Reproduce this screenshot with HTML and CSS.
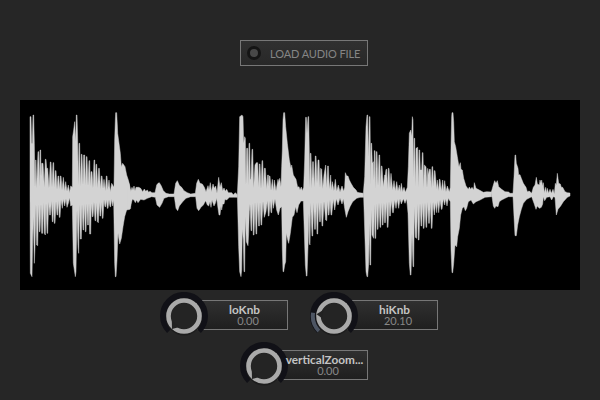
FILE: index.html
```
<!DOCTYPE html>
<html lang="en">
<head>
<meta charset="utf-8">
<title>Audio waveform</title>
<link rel="stylesheet" href="styles.css">
</head>
<body>
<main class="panel">
  <button class="load" type="button"><span class="led"></span><span class="load-text">LOAD AUDIO FILE</span></button>
  <svg class="wave" viewBox="0 0 1680 570" role="img" aria-label="Waveform">
    <!-- each polygon holds one stretch of the sample, around the zero line at y=285 -->
    <polygon points="30,285 30,50 33,50 35,130 37,130 39,45 41,45 43,130 45,262 47,180 48,180 50,265 54,155 56,155 59,260 60,150 62,150 63,230 65,190 69,190 73,262 76,178 78,178 80,205 83,205 87,264 91,186 93,186 96,262 99,188 101,188 103,262 106,212 108,212 111,268 114,228 116,228 119,268 121,228 123,228 126,270 130,232 134,272 137,245 141,274 145,255 149,278 152,258 157,262 158,110 161,90 164,65 167,125 169,45 171,45 173,120 175,256 177,130 179,130 181,258 184,163 186,163 189,256 191,165 194,165 196,256 199,170 201,170 204,258 207,182 209,182 211,258 213,215 216,215 219,264 222,180 224,180 226,260 228,193 230,193 233,264 236,205 238,205 241,266 244,228 246,228 249,266 252,238 256,272 259,228 261,228 263,270 267,240 271,275 275,250 282,262 284,120 286,60 287,38 290,38 292,75 293,100 297,130 301,160 304,200 308,190 315,200 320,225 325,240 328,252 332,275 332,325 330,328 320,330 314,350 309,380 304,415 299,432 294,400 291,480 288,530 286,530 284,490 281,300 278,318 275,298 272,320 270,320 267,299 264,325 262,325 259,299 257,320 255,320 252,299 249,355 247,355 245,306 242,348 240,348 238,306 235,368 232,365 230,308 227,362 225,362 222,306 219,350 217,350 214,310 212,402 209,402 207,310 205,375 203,375 200,310 198,395 196,395 193,312 191,390 189,390 186,312 184,417 181,417 178,314 176,460 174,440 171,330 168,515 166,530 160,490 157,315 152,318 149,293 145,310 141,322 138,296 134,318 130,298 127,325 123,299 120,352 118,352 115,302 113,345 111,345 108,304 105,370 103,370 101,306 99,365 97,365 94,304 91,345 89,345 86,306 83,400 81,400 78,308 76,405 73,400 70,308 68,400 65,400 63,312 60,395 58,395 56,312 53,437 50,435 48,312 45,440 43,490 40,350 38,420 36,530 31,520"/>
    <polygon points="325,245 328,255 332,275 336,262 339,270 342,258 345,272 348,262 356,262 362,265 368,275 373,267 377,274 382,270 386,277 390,274 396,278 405,278 410,255 414,250 418,248 424,258 430,272 438,280 448,282 462,282 467,250 472,242 478,256 485,262 492,272 502,278 512,282 526,280 530,250 535,238 540,250 547,252 553,262 558,275 564,257 567,270 571,248 574,275 579,252 583,265 587,258 591,280 596,232 600,262 604,248 608,272 612,264 616,274 620,268 625,278 635,278 640,284 646,278 652,284 652,292 640,292 628,292 620,300 615,298 612,312 608,312 605,330 603,318 600,345 597,345 594,325 590,295 586,310 582,318 576,300 573,322 570,305 566,318 562,315 557,302 550,315 543,322 536,332 531,325 527,290 512,290 498,295 488,305 478,318 473,332 468,325 463,290 445,290 432,295 426,310 419,322 411,315 406,292 395,290 382,295 372,300 362,298 354,308 350,300 346,308 342,300 337,298 332,318 325,328"/>
    <polygon points="652,284 656,200 659,50 666,45 669,50 671,130 674,110 676,115 678,256 680,145 683,145 685,256 687,130 689,130 691,240 693,235 696,148 698,148 701,264 705,195 709,188 713,188 716,262 718,192 720,192 723,266 726,182 728,182 731,262 733,205 736,205 740,266 743,225 745,225 746,260 748,228 750,228 753,272 757,238 761,272 763,240 768,272 774,238 776,248 779,235 783,260 785,200 787,150 789,60 791,38 794,38 797,80 802,130 808,180 813,205 815,195 820,225 828,238 833,262 837,260 840,270 844,261 847,272 851,262 854,180 857,52 859,52 861,100 864,50 866,50 868,160 869,262 871,160 873,160 875,264 878,185 880,185 883,262 886,168 888,168 891,250 894,180 897,180 900,264 902,205 905,208 908,266 912,225 917,195 920,264 923,198 925,198 928,268 932,225 934,270 937,245 942,272 946,238 950,274 955,255 960,276 966,258 971,274 974,262 976,218 980,228 984,228 988,240 993,250 1000,262 1008,270 1012,277 1018,278 1030,280 1031,292 1020,292 1010,295 998,305 990,320 984,335 979,352 974,325 970,296 966,312 960,294 954,315 949,296 944,330 940,298 935,345 933,345 930,300 927,345 925,345 923,304 920,362 917,360 912,304 908,378 906,378 903,306 901,365 899,365 896,306 893,402 891,402 889,308 886,388 884,388 881,308 878,408 876,408 872,308 870,435 868,430 867,340 864,440 861,528 859,528 856,495 853,400 850,303 843,303 836,315 831,338 827,320 822,345 817,352 811,400 806,430 802,415 799,400 797,485 794,495 791,515 789,515 787,450 785,320 780,325 775,345 770,330 765,297 760,325 757,298 755,338 753,338 750,302 747,348 745,348 742,302 738,335 733,352 729,304 725,375 723,375 720,306 718,378 716,378 713,306 710,402 708,402 705,306 702,405 700,405 697,310 695,392 693,392 690,312 688,335 686,400 684,437 679,425 676,350 674,515 672,515 670,420 667,388 665,510 663,530 659,515 656,440"/>
    <polygon points="1030,280 1034,230 1038,80 1041,45 1043,45 1045,170 1048,50 1050,50 1052,256 1053,130 1055,130 1057,190 1060,185 1062,240 1063,152 1065,152 1067,266 1069,155 1071,155 1074,258 1077,165 1079,165 1082,264 1084,198 1086,198 1090,260 1094,225 1096,225 1098,208 1100,208 1102,266 1105,205 1107,205 1110,264 1113,220 1118,270 1122,242 1126,272 1130,245 1134,273 1138,255 1141,275 1144,250 1148,275 1152,262 1156,277 1162,262 1165,200 1168,100 1172,90 1175,110 1177,50 1179,60 1180,235 1182,115 1184,115 1186,258 1188,145 1193,142 1195,262 1197,150 1199,150 1201,210 1205,210 1207,158 1209,158 1211,264 1213,195 1218,200 1221,264 1223,205 1226,225 1228,208 1231,208 1234,264 1236,200 1238,200 1241,260 1243,212 1245,212 1250,268 1252,240 1256,272 1258,238 1260,238 1264,273 1268,240 1271,274 1274,242 1278,275 1282,258 1288,276 1291,262 1293,140 1295,50 1296,38 1299,38 1301,65 1303,125 1307,140 1312,170 1317,200 1321,188 1323,208 1327,210 1331,235 1338,258 1345,268 1348,261 1352,268 1356,262 1361,270 1363,248 1368,265 1378,270 1390,277 1400,275 1415,276 1415,290 1395,292 1380,300 1368,305 1360,312 1353,300 1345,305 1340,325 1336,332 1332,320 1327,325 1322,345 1318,385 1313,410 1310,440 1305,435 1301,490 1298,518 1296,518 1293,450 1291,305 1285,295 1281,318 1277,296 1274,315 1270,296 1266,328 1264,328 1260,300 1256,338 1253,302 1250,338 1247,308 1243,345 1239,306 1236,385 1234,385 1231,306 1228,370 1226,370 1223,306 1220,382 1218,382 1215,308 1212,385 1210,385 1208,308 1205,378 1203,378 1200,310 1197,420 1195,420 1192,312 1190,415 1186,412 1183,320 1181,500 1179,500 1176,400 1173,525 1171,525 1168,490 1164,340 1160,296 1155,310 1150,296 1144,312 1140,296 1136,325 1132,298 1128,325 1124,300 1120,338 1118,338 1114,302 1111,348 1109,348 1107,304 1104,382 1102,382 1099,306 1096,368 1094,368 1092,308 1089,375 1087,375 1085,308 1082,382 1080,382 1077,308 1074,388 1072,388 1070,310 1067,415 1065,415 1063,312 1061,415 1056,405 1054,330 1052,495 1050,495 1048,370 1046,490 1043,530 1041,530 1038,515 1035,420 1031,292"/>
    <polygon points="1414,276 1420,255 1424,242 1428,250 1432,242 1436,260 1445,268 1455,275 1466,276 1470,280 1479,280 1482,230 1485,165 1487,165 1489,190 1494,205 1496,225 1500,224 1504,235 1510,250 1518,262 1522,275 1528,273 1535,280 1540,262 1545,255 1549,232 1552,252 1558,255 1560,240 1563,250 1565,240 1568,258 1570,248 1573,278 1577,262 1580,280 1582,265 1586,280 1590,268 1594,280 1599,268 1603,282 1606,250 1609,255 1612,220 1616,250 1621,252 1624,262 1628,262 1635,275 1642,278 1650,279 1650,288 1642,292 1630,305 1622,318 1614,328 1609,345 1605,292 1600,290 1595,300 1590,290 1580,292 1574,302 1570,290 1568,312 1564,322 1558,325 1552,318 1548,328 1542,310 1535,290 1520,298 1510,310 1504,328 1498,350 1493,375 1489,407 1485,407 1482,350 1479,290 1465,290 1455,295 1445,300 1438,305 1434,320 1428,318 1424,325 1420,318 1416,290"/>
  </svg>
  <div class="knobs">
    <div class="knob">
      <div class="box"><span class="name">loKnb</span><span class="value">0.00</span></div>
      <svg class="dial" viewBox="0 0 48 48"><path class="track" d="M9.2 38.8A21 21 0 1 1 38.8 38.8"/><circle class="shade" cx="24" cy="25.5" r="18"/><circle class="cap" cx="24" cy="24" r="15.5"/><path class="tip" d="M11.8 28.5L12 37L19.5 35Z"/></svg>
    </div>
    <div class="knob">
      <div class="box"><span class="name">hiKnb</span><span class="value">20.10</span></div>
      <svg class="dial" viewBox="0 0 48 48"><path class="track" d="M9.2 38.8A21 21 0 1 1 38.8 38.8"/><path class="fill" d="M9 39A21.2 21.2 0 0 1 3.1 20.7"/><circle class="shade" cx="24" cy="25.5" r="18"/><circle class="cap" cx="24" cy="24" r="15.5"/><path class="tip" d="M13.2 18L6.5 22.2L12.5 26.5Z"/></svg>
    </div>
    <div class="knob vertical">
      <div class="box"><span class="name">verticalZoom...</span><span class="value">0.00</span></div>
      <svg class="dial" viewBox="0 0 48 48"><path class="track" d="M9.2 38.8A21 21 0 1 1 38.8 38.8"/><circle class="shade" cx="24" cy="25.5" r="18"/><circle class="cap" cx="24" cy="24" r="15.5"/><path class="tip" d="M11.8 28.5L12 37L19.5 35Z"/></svg>
    </div>
  </div>
</main>
</body>
</html>
```
FILE: styles.css
```
body {
  margin: 0;
  background: #262626;
  font-family: Lato, sans-serif;
}

.panel {
  box-sizing: border-box;
  height: 400px;
  padding: 40px 20px 0;
  display: flex;
  flex-direction: column;
  align-items: center;
  overflow: hidden;
}

.load {
  box-sizing: border-box;
  width: 128px;
  height: 26px;
  margin: 0 0 34px 8px;
  padding: 0 0 0 6px;
  display: flex;
  align-items: center;
  gap: 9px;
  border: 1px solid #777;
  background: linear-gradient(#303030, #282828);
  color: #858585;
  font: 11px Lato, sans-serif;
  letter-spacing: -0.1px;
  white-space: nowrap;
}

.led {
  box-sizing: border-box;
  flex: none;
  width: 14px;
  height: 14px;
  border: 3px solid #151515;
  border-radius: 50%;
  background: #484848;
}

.wave {
  display: block;
  flex: none;
  width: 560px;
  height: 190px;
  background: #000;
  fill: #d3d3d3;
  stroke: #d3d3d3;
  stroke-width: 1.4;
  stroke-linejoin: bevel;
}

.knobs {
  width: 278px;
  margin: 2px 2px 0 0;
  display: flex;
  flex-wrap: wrap;
  gap: 2px 22px;
}

.knob {
  position: relative;
  width: 128px;
  height: 48px;
}

.vertical {
  margin-left: 80px;
}

.box {
  box-sizing: border-box;
  width: 92px;
  height: 30px;
  margin: 8px 0 0 36px;
  border: 1px solid #777;
  background: linear-gradient(#303030, #1f1f1f);
  display: flex;
  flex-direction: column;
  align-items: center;
}

.name {
  position: relative;
  z-index: 2;
  margin: 3px 0 0 5px;
  color: #c4c4c4;
  font-size: 11.8px;
  font-weight: 700;
  line-height: 12px;
}

.value {
  margin-left: 12px;
  color: #888;
  font-size: 11px;
  line-height: 10px;
}

.dial {
  position: absolute;
  z-index: 1;
  left: 0;
  top: 0;
  width: 48px;
  height: 48px;
}

.track {
  fill: none;
  stroke: #111117;
  stroke-width: 6;
}

.fill {
  fill: none;
  stroke: #4d5563;
  stroke-width: 4;
}

.shade {
  fill: #1d1d1d;
}

.cap {
  fill: #242424;
  stroke: #aaa;
  stroke-width: 4.6;
}

.tip {
  fill: #222;
}
```
